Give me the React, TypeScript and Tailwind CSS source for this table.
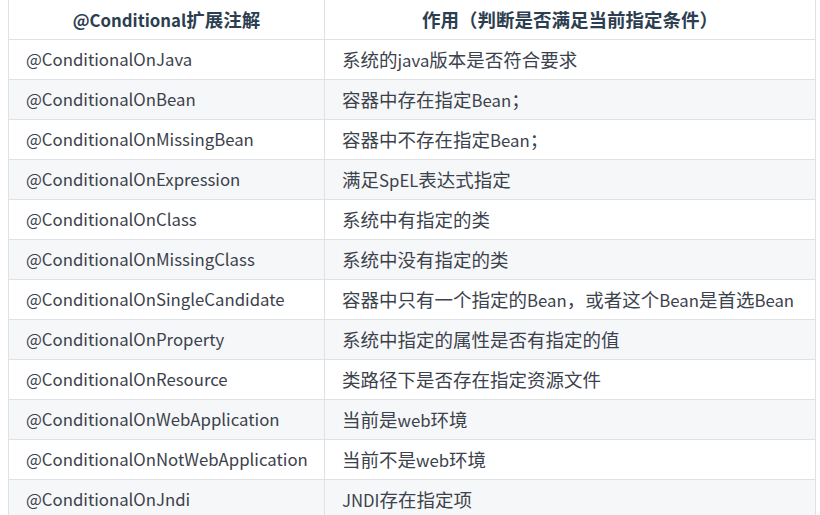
const rows = [
  ['@ConditionalOnJava', '系统的java版本是否符合要求'],
  ['@ConditionalOnBean', '容器中存在指定Bean；'],
  ['@ConditionalOnMissingBean', '容器中不存在指定Bean；'],
  ['@ConditionalOnExpression', '满足SpEL表达式指定'],
  ['@ConditionalOnClass', '系统中有指定的类'],
  ['@ConditionalOnMissingClass', '系统中没有指定的类'],
  ['@ConditionalOnSingleCandidate', '容器中只有一个指定的Bean，或者这个Bean是首选Bean'],
  ['@ConditionalOnProperty', '系统中指定的属性是否有指定的值'],
  ['@ConditionalOnResource', '类路径下是否存在指定资源文件'],
  ['@ConditionalOnWebApplication', '当前是web环境'],
  ['@ConditionalOnNotWebApplication', '当前不是web环境'],
  ['@ConditionalOnJndi', 'JNDI存在指定项'],
]

// CJK glyphs in the shot run a bit larger than the latin ones
function Mixed({ text }: { text: string }) {
  const parts = text.split(/([\u3000-\u9fff\uff00-\uffef]+)/)
  return (
    <span>
      {parts.map((p, i) =>
        i % 2 === 1 ? (
          <span key={i} className="text-[18.5px]">
            {p}
          </span>
        ) : (
          <span key={i}>{p}</span>
        ),
      )}
    </span>
  )
}

export default function App() {
  return (
    <div
      className="h-[515px] w-[820px] overflow-hidden bg-white text-[16.75px] text-[#3b424c]"
      style={{ fontFamily: '"Noto Sans CJK SC", "Noto Sans", sans-serif' }}
    >
      <div className="ml-[8px] w-[808px] border-x border-[#dfe2e5]">
        {/* header */}
        <div className="flex h-[40px] border-b border-[#dfe2e5] font-bold text-[#2c3e50]">
          <div className="flex w-[316px] items-center justify-center border-r border-[#dfe2e5]">
            <Mixed text="@Conditional扩展注解" />
          </div>
          <div className="flex flex-1 items-center justify-center">
            <Mixed text="作用（判断是否满足当前指定条件）" />
          </div>
        </div>
        {rows.map(([a, b], i) => (
          <div
            key={a}
            className={`flex h-[40px] border-b border-[#dfe2e5] ${i % 2 === 1 ? 'bg-[#f6f7f8]' : 'bg-white'}`}
          >
            <div className="flex w-[316px] items-center border-r border-[#dfe2e5] pl-[17px]">{a}</div>
            <div className="flex flex-1 items-center pl-[17px]">
              <Mixed text={b} />
            </div>
          </div>
        ))}
      </div>
    </div>
  )
}
